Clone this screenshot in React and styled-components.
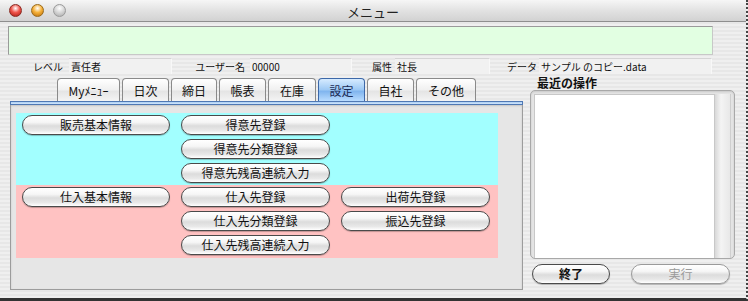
import styled, { createGlobalStyle } from "styled-components";

const GlobalStyle = createGlobalStyle`
  html, body {
    margin: 0;
    padding: 0;
    background: #ececec;
  }
  body {
    font-family: "Noto Sans CJK JP", "Liberation Sans", sans-serif;
  }
`;

const Window = styled.div`
  width: 748px;
  height: 301px;
  box-sizing: border-box;
  background: repeating-linear-gradient(
    to bottom,
    #efefef 0,
    #efefef 2px,
    #e7e7e7 2px,
    #e7e7e7 4px
  );
  border-right: 2px dotted #444;
  border-bottom: 3px solid #333;
  display: flex;
  flex-direction: column;
  overflow: hidden;
`;

const TitleBar = styled.div`
  height: 22px;
  box-sizing: border-box;
  background: linear-gradient(to bottom, #f6f6f6, #e2e2e2 50%, #d2d2d2);
  border-bottom: 1px solid #8e8e8e;
  display: flex;
  align-items: center;
  padding-left: 9px;
  gap: 9px;
  position: relative;
`;

const Light = styled.span`
  width: 13px;
  height: 13px;
  border-radius: 50%;
  box-sizing: border-box;
  border: 1px solid ${(p) => p.$edge};
  background: radial-gradient(circle at 50% 30%, #fff 0, ${(p) => p.$color} 45%, ${(p) => p.$dark} 100%);
`;

const Title = styled.div`
  position: absolute;
  left: 0;
  right: 0;
  top: 2px;
  text-align: center;
  font-size: 13px;
  color: #222;
  pointer-events: none;
`;

const MessageBox = styled.div`
  margin: 4px 0 0 8px;
  width: 705px;
  height: 29px;
  box-sizing: border-box;
  background: #e2ffe2;
  border: 1px solid #9a9a9a;
  border-right-color: #c8c8c8;
  border-bottom-color: #c8c8c8;
`;

const InfoRow = styled.div`
  display: flex;
  align-items: center;
  margin: 3px 0 0 8px;
  height: 16px;
`;

const InfoLabel = styled.span`
  width: ${(p) => p.$w}px;
  margin-right: ${(p) => p.$gap}px;
  text-align: right;
  font-size: 10px;
  color: #111;
  white-space: nowrap;
`;

const InfoField = styled.span`
  width: ${(p) => p.$w}px;
  height: 16px;
  box-sizing: border-box;
  padding-left: 2px;
  font-size: 10px;
  line-height: 15px;
  color: #111;
  background: #f1f1f1;
  border-top: 1px solid #d4d4d4;
  border-right: 1px solid #f8f8f8;
  white-space: nowrap;
`;

const Main = styled.div`
  display: flex;
  margin-left: 10px;
`;

const LeftCol = styled.div`
  width: 513px;
  display: flex;
  flex-direction: column;
`;

const Tabs = styled.div`
  display: flex;
  justify-content: center;
  gap: 2px;
  margin-top: 4px;
  height: 23px;
`;

const Tab = styled.div`
  width: ${(p) => p.$w}px;
  box-sizing: border-box;
  border: 1px solid ${(p) => (p.$active ? "#3d68a8" : "#8a8a8a")};
  border-bottom: none;
  border-radius: 4px 4px 0 0;
  background: ${(p) =>
    p.$active
      ? "linear-gradient(to bottom, #d6ebff, #9cc8f4 50%, #7fb4ee 55%, #b9dcff)"
      : "linear-gradient(to bottom, #ffffff, #f0f0f0 50%, #e4e4e4 55%, #f4f4f4)"};
  font-size: 12px;
  color: ${(p) => (p.$active ? "#1c2c55" : "#111")};
  display: flex;
  align-items: center;
  justify-content: center;
  padding-top: 1px;
`;

const TabBar = styled.div`
  height: 4px;
  box-sizing: border-box;
  background: linear-gradient(to bottom, #a9cdf4, #d2e6fb);
  border: 1px solid #4f78b4;
`;

const Panel = styled.div`
  height: 185px;
  box-sizing: border-box;
  background: #e6e6e6;
  border: 1px solid #9c9c9c;
  border-top: none;
  box-shadow: inset 0 1px 2px rgba(0, 0, 0, 0.15);
  padding: 8px 0 0 5px;
`;

const Section = styled.div`
  width: 482px;
  box-sizing: border-box;
  background: ${(p) => p.$bg};
  padding: 2px 0 ${(p) => p.$pb}px 6px;
  display: grid;
  grid-template-columns: 148px 149px 149px;
  grid-auto-rows: 20px;
  column-gap: 11px;
  row-gap: 4px;
`;

const AquaButton = styled.button`
  grid-column: ${(p) => p.$col};
  width: ${(p) => (p.$w ? `${p.$w}px` : "auto")};
  height: 20px;
  box-sizing: border-box;
  border: 1px solid ${(p) => (p.disabled ? "#9a9a9a" : "#4a4a4a")};
  border-radius: 10px;
  background: linear-gradient(
    to bottom,
    #ffffff 0,
    #f6f6f6 35%,
    #dcdcdc 55%,
    #e8e8e8 80%,
    #ffffff 100%
  );
  box-shadow: 0 1px 1px rgba(0, 0, 0, 0.25);
  font-family: "Noto Sans CJK JP", "Liberation Sans", sans-serif;
  font-size: 12px;
  font-weight: ${(p) => (p.$bold ? 700 : 400)};
  color: ${(p) => (p.disabled ? "#9a9a9a" : "#111")};
  padding: 0;
  line-height: 18px;
  cursor: default;
`;

const RightCol = styled.div`
  margin-left: 7px;
  width: 205px;
  display: flex;
  flex-direction: column;
`;

const Heading = styled.div`
  font-size: 12px;
  font-weight: 700;
  color: #111;
  padding-left: 7px;
  height: 15px;
  line-height: 15px;
  margin-top: 1px;
`;

const ListFrame = styled.div`
  height: 169px;
  box-sizing: border-box;
  border: 1px solid #a8a8a8;
  border-radius: 5px;
  background: #e4e4e4;
  padding: 3px 3px 0 3px;
  display: flex;
  box-shadow: inset 0 1px 2px rgba(0, 0, 0, 0.12);
`;

const ListArea = styled.div`
  flex: 1;
  background: #fff;
  border: 1px solid #c8c8c8;
  border-bottom: none;
`;

const ScrollTrack = styled.div`
  width: 15px;
  background: linear-gradient(to right, #d8d8d8, #f4f4f4 40%, #e8e8e8);
  border-right: 1px solid #cfcfcf;
`;

const ButtonRow = styled.div`
  display: flex;
  justify-content: space-between;
  margin: 5px 5px 0 2px;
`;

const tabs = [
  ["Myﾒﾆｭｰ", 63],
  ["日次", 47],
  ["締日", 46],
  ["帳表", 47],
  ["在庫", 48],
  ["設定", 47, true],
  ["自社", 47],
  ["その他", 60],
];

export default function App() {
  return (
    <>
      <GlobalStyle />
      <Window>
        <TitleBar>
          <Light $color="#f0564c" $dark="#a8180e" $edge="#8a2a22" />
          <Light $color="#f6b23a" $dark="#b86a0a" $edge="#9a6a1a" />
          <Light $color="#d8d8d8" $dark="#a8a8a8" $edge="#9a9a9a" />
          <Title>メニュー</Title>
        </TitleBar>
        <MessageBox />
        <InfoRow>
          <InfoLabel $w={55} $gap={6}>レベル</InfoLabel>
          <InfoField $w={103}>責任者</InfoField>
          <InfoLabel $w={73} $gap={5}>ユーザー名</InfoLabel>
          <InfoField $w={102}>00000</InfoField>
          <InfoLabel $w={40} $gap={3}>属性</InfoLabel>
          <InfoField $w={95}>社長</InfoField>
          <InfoLabel $w={47} $gap={2}>データ</InfoLabel>
          <InfoField $w={173}>サンプル のコピー.data</InfoField>
        </InfoRow>
        <Main>
          <LeftCol>
            <Tabs>
              {tabs.map(([label, w, active]) => (
                <Tab key={label} $w={w} $active={active}>
                  {label}
                </Tab>
              ))}
            </Tabs>
            <TabBar />
            <Panel>
              <Section $bg="#a2ffff" $pb={2}>
                <AquaButton $col={1}>販売基本情報</AquaButton>
                <AquaButton $col={2}>得意先登録</AquaButton>
                <AquaButton $col={2}>得意先分類登録</AquaButton>
                <AquaButton $col={2}>得意先残高連続入力</AquaButton>
              </Section>
              <Section $bg="#ffc2c2" $pb={3}>
                <AquaButton $col={1}>仕入基本情報</AquaButton>
                <AquaButton $col={2}>仕入先登録</AquaButton>
                <AquaButton $col={3}>出荷先登録</AquaButton>
                <AquaButton $col={2}>仕入先分類登録</AquaButton>
                <AquaButton $col={3}>振込先登録</AquaButton>
                <AquaButton $col={2}>仕入先残高連続入力</AquaButton>
              </Section>
            </Panel>
          </LeftCol>
          <RightCol>
            <Heading>最近の操作</Heading>
            <ListFrame>
              <ListArea />
              <ScrollTrack />
            </ListFrame>
            <ButtonRow>
              <AquaButton $w={78} $bold>終了</AquaButton>
              <AquaButton $w={99} disabled>実行</AquaButton>
            </ButtonRow>
          </RightCol>
        </Main>
      </Window>
    </>
  );
}
